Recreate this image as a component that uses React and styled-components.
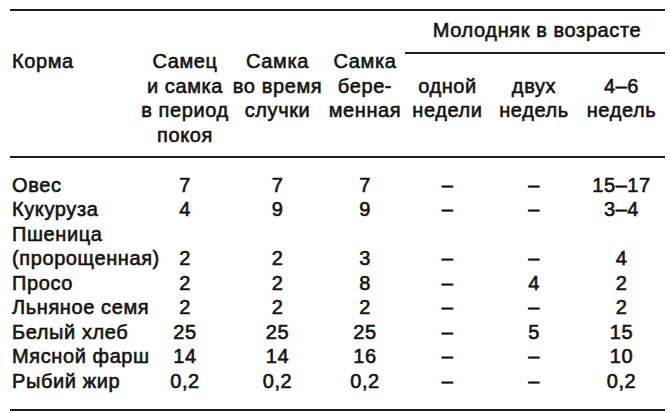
import React from "react";
import styled, { createGlobalStyle } from "styled-components";

const GlobalStyle = createGlobalStyle`
  html, body {
    margin: 0;
    padding: 0;
    background: #ffffff;
  }
  body {
    font-family: "Liberation Sans", Arial, sans-serif;
    color: #141414;
  }
`;

const Page = styled.div`
  width: 670px;
  height: 413px;
  padding: 9px 5px 0 10px;
  box-sizing: border-box;
  overflow: hidden;
`;

const Table = styled.table`
  width: 655px;
  border-collapse: collapse;
  table-layout: fixed;
  font-size: 20px;
  line-height: 24.5px;
  letter-spacing: 0.6px;
  -webkit-text-stroke: 0.6px #141414;
  border-top: 2px solid #1c1c1c;
  border-bottom: 2px solid #1c1c1c;
`;

const Head = styled.thead`
  border-bottom: 2px solid #1c1c1c;
`;

const HeadCell = styled.th`
  font-weight: normal;
  padding: ${({ $top }) => $top || 0}px 0 ${({ $bottom }) => $bottom || 0}px;
  text-align: ${({ $left }) => ($left ? "left" : "center")};
  padding-left: ${({ $left }) => ($left ? "2px" : "0")};
  vertical-align: top;
  white-space: nowrap;
`;

const GroupCell = styled.th`
  font-weight: normal;
  text-align: center;
  padding: 7px 0 9px 4px;
  white-space: nowrap;
  border-bottom: 2px solid #1c1c1c;
`;

const Row = styled.tr`
  &:first-child td {
    padding-top: 15px;
  }
  &:last-child td {
    padding-bottom: 16px;
  }
`;

const Cell = styled.td`
  padding: 0;
  text-align: ${({ $left }) => ($left ? "left" : "center")};
  padding-left: ${({ $left }) => ($left ? "2px" : "0")};
  vertical-align: bottom;
  white-space: nowrap;
`;

const columns = [130, 90, 95, 80, 85, 88, 87];

const rows = [
  { name: ["Овес"], v: ["7", "7", "7", "–", "–", "15–17"] },
  { name: ["Кукуруза"], v: ["4", "9", "9", "–", "–", "3–4"] },
  { name: ["Пшеница", "(пророщенная)"], v: ["2", "2", "3", "–", "–", "4"] },
  { name: ["Просо"], v: ["2", "2", "8", "–", "4", "2"] },
  { name: ["Льняное семя"], v: ["2", "2", "2", "–", "–", "2"] },
  { name: ["Белый хлеб"], v: ["25", "25", "25", "–", "5", "15"] },
  { name: ["Мясной фарш"], v: ["14", "14", "16", "–", "–", "10"] },
  { name: ["Рыбий жир"], v: ["0,2", "0,2", "0,2", "–", "–", "0,2"] },
];

const Lines = ({ items }) =>
  items.map((t, i) => (
    <React.Fragment key={i}>
      {i > 0 && <br />}
      {t}
    </React.Fragment>
  ));

export default function App() {
  return (
    <Page>
      <GlobalStyle />
      <Table>
        <colgroup>
          {columns.map((w, i) => (
            <col key={i} style={{ width: w }} />
          ))}
        </colgroup>
        <Head>
          <tr>
            <HeadCell rowSpan={2} $left $top={38} $bottom={8}>
              Корма
            </HeadCell>
            <HeadCell rowSpan={2} $top={38} $bottom={8}>
              <Lines items={["Самец", "и самка", "в период", "покоя"]} />
            </HeadCell>
            <HeadCell rowSpan={2} $top={38} $bottom={8}>
              <Lines items={["Самка", "во время", "случки"]} />
            </HeadCell>
            <HeadCell rowSpan={2} $top={38} $bottom={8}>
              <Lines items={["Самка", "бере-", "менная"]} />
            </HeadCell>
            <GroupCell colSpan={3}>Молодняк в возрасте</GroupCell>
          </tr>
          <tr>
            <HeadCell $top={20} $bottom={33}>
              <Lines items={["одной", "недели"]} />
            </HeadCell>
            <HeadCell $top={20} $bottom={33}>
              <Lines items={["двух", "недель"]} />
            </HeadCell>
            <HeadCell $top={20} $bottom={33}>
              <Lines items={["4–6", "недель"]} />
            </HeadCell>
          </tr>
        </Head>
        <tbody>
          {rows.map((r) => (
            <Row key={r.name.join(" ")}>
              <Cell $left>
                <Lines items={r.name} />
              </Cell>
              {r.v.map((val, i) => (
                <Cell key={i}>{val}</Cell>
              ))}
            </Row>
          ))}
        </tbody>
      </Table>
    </Page>
  );
}
